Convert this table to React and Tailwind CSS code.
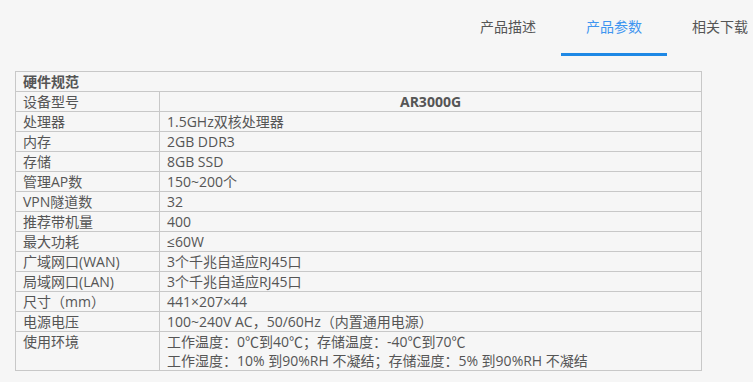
import React from 'react'

const rows = [
  ['处理器', '1.5GHz双核处理器'],
  ['内存', '2GB DDR3'],
  ['存储', '8GB SSD'],
  ['管理AP数', '150~200个'],
  ['VPN隧道数', '32'],
  ['推荐带机量', '400'],
  ['最大功耗', '≤60W'],
  ['广域网口(WAN)', '3个千兆自适应RJ45口'],
  ['局域网口(LAN)', '3个千兆自适应RJ45口'],
  ['尺寸（mm）', '441×207×44'],
  ['电源电压', '100~240V AC，50/60Hz（内置通用电源）'],
]

const tabs = ['产品描述', '产品参数', '相关下载']

export default function App() {
  return (
    <div
      className="w-[753px] h-[382px] overflow-hidden bg-[#f6f6f6] text-[#555]"
      style={{ fontFamily: '"Open Sans", "Noto Sans CJK SC", sans-serif' }}
    >
      <div className="flex h-[56px] pl-[455px]">
        {tabs.map((t, i) => (
          <div
            key={t}
            className={
              'shrink-0 w-[106px] flex items-center justify-center text-[14px] border-b-[3px] ' +
              (i === 1 ? 'text-[#3f95f0] border-[#1e88e5]' : 'text-[#555] border-transparent')
            }
          >
            {t}
          </div>
        ))}
      </div>

      <div className="pt-[15px] pl-[15px]">
        <table className="border-collapse text-[14px] leading-[19px] w-[687px]">
          <tbody>
            <tr>
              <td colSpan={2} className="border border-[#c8c8c8] pl-[7px] h-[20px] font-bold">硬件规范</td>
            </tr>
            <tr>
              <td className="border border-[#c8c8c8] pl-[7px] h-[20px] w-[144px]">设备型号</td>
              <td className="border border-[#c8c8c8] text-center font-bold">AR3000G</td>
            </tr>
            {rows.map(([k, v]) => (
              <tr key={k}>
                <td className="border border-[#c8c8c8] pl-[7px] h-[20px]">{k}</td>
                <td className="border border-[#c8c8c8] pl-[7px]">{v}</td>
              </tr>
            ))}
            <tr>
              <td className="border border-[#c8c8c8] pl-[7px] align-top">使用环境</td>
              <td className="border border-[#c8c8c8] pl-[7px]">
                <div>工作温度：0℃到40℃；存储温度：-40℃到70℃</div>
                <div>工作湿度：10% 到90%RH 不凝结；存储湿度：5% 到90%RH 不凝结</div>
              </td>
            </tr>
          </tbody>
        </table>
      </div>
    </div>
  )
}
